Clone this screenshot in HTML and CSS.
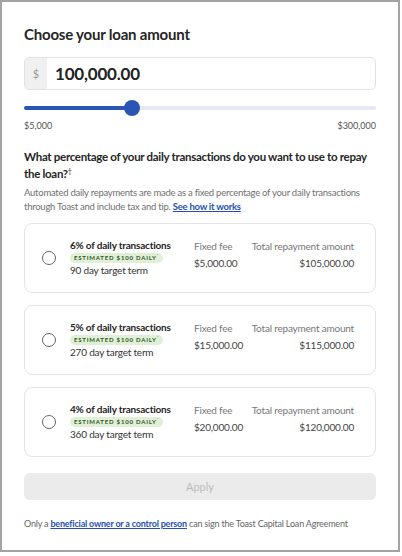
FILE: index.html
```html
<!DOCTYPE html>
<html lang="en">
<head>
  <meta charset="UTF-8">
  <meta name="viewport" content="width=device-width, initial-scale=1.0">
  <title>Choose your loan amount</title>
  <link rel="stylesheet" href="styles.css">
</head>
<body>
  <div class="loan-panel">
    <h1>Choose your loan amount</h1>

    <div class="amount-field">
      <span class="amount-prefix">$</span>
      <span class="amount-value">100,000.00</span>
    </div>

    <div class="slider">
      <div class="slider-fill"></div>
      <div class="slider-thumb"></div>
    </div>
    <div class="slider-labels">
      <span>$5,000</span>
      <span>$300,000</span>
    </div>

    <h2>What percentage of your daily transactions do you want to use to repay the loan?<sup>†</sup></h2>
    <p class="hint">Automated daily repayments are made as a fixed percentage of your daily transactions through Toast and include tax and tip. <a href="#">See how it works</a></p>

    <div class="options">
      <label class="option">
        <span class="radio"></span>
        <div class="option-main">
          <div class="option-title">6% of daily transactions</div>
          <span class="badge">Estimated $100 daily<sup>*</sup></span>
          <div class="option-term">90 day target term</div>
        </div>
        <div class="option-fee">
          <div class="col-label">Fixed fee</div>
          <div class="col-value">$5,000.00</div>
        </div>
        <div class="option-total">
          <div class="col-label">Total repayment amount</div>
          <div class="col-value">$105,000.00</div>
        </div>
      </label>

      <label class="option">
        <span class="radio"></span>
        <div class="option-main">
          <div class="option-title">5% of daily transactions</div>
          <span class="badge">Estimated $100 daily<sup>*</sup></span>
          <div class="option-term">270 day target term</div>
        </div>
        <div class="option-fee">
          <div class="col-label">Fixed fee</div>
          <div class="col-value">$15,000.00</div>
        </div>
        <div class="option-total">
          <div class="col-label">Total repayment amount</div>
          <div class="col-value">$115,000.00</div>
        </div>
      </label>

      <label class="option">
        <span class="radio"></span>
        <div class="option-main">
          <div class="option-title">4% of daily transactions</div>
          <span class="badge">Estimated $100 daily<sup>*</sup></span>
          <div class="option-term">360 day target term</div>
        </div>
        <div class="option-fee">
          <div class="col-label">Fixed fee</div>
          <div class="col-value">$20,000.00</div>
        </div>
        <div class="option-total">
          <div class="col-label">Total repayment amount</div>
          <div class="col-value">$120,000.00</div>
        </div>
      </label>
    </div>

    <button class="apply" disabled>Apply</button>

    <p class="footnote">Only a <a href="#">beneficial owner or a control person</a> can sign the Toast Capital Loan Agreement</p>
  </div>
</body>
</html>
```

FILE: styles.css
```css
body {
  margin: 0;
  background: #fff;
  font-family: 'Lato', sans-serif;
  color: #252525;
}
.loan-panel {
  width: 400px;
  height: 552px;
  box-sizing: border-box;
  border: 2px solid #a3a3a3;
  padding: 20px 22px 0 22px;
}
h1 {
  font-size: 15px;
  letter-spacing: -0.2px;
  font-weight: 700;
  margin: 0 0 11px;
  line-height: 24px;
}
.amount-field {
  display: flex;
  height: 31px;
  border: 1px solid #e2e2e2;
  border-radius: 5px;
  overflow: hidden;
}
.amount-prefix {
  width: 22px;
  background: #f0f0f0;
  color: #999;
  font-size: 11px;
  display: flex;
  align-items: center;
  justify-content: center;
}
.amount-value {
  font-size: 17px;
  letter-spacing: -0.2px;
  font-weight: 700;
  padding-left: 8px;
  display: flex;
  align-items: center;
  color: #222;
}
.slider {
  position: relative;
  height: 4px;
  margin-top: 16px;
  background: #e6e9f5;
  border-radius: 2px;
}
.slider-fill {
  width: 108px;
  height: 4px;
  background: #2b55b5;
  border-radius: 2px;
}
.slider-thumb {
  position: absolute;
  left: 100px;
  top: -6px;
  width: 16px;
  height: 16px;
  border-radius: 50%;
  background: #2b55b5;
}
.slider-labels {
  display: flex;
  justify-content: space-between;
  font-size: 9px;
  color: #555;
  margin-top: 10px;
}
h2 {
  font-size: 11.5px;
  font-weight: 700;
  letter-spacing: -0.3px;
  line-height: 17px;
  margin: 17px 0 4px;
}
h2 sup {
  font-size: 7px;
  font-weight: 400;
  line-height: 0;
  vertical-align: 4px;
}
.hint {
  font-size: 9.5px;
  letter-spacing: -0.25px;
  line-height: 14px;
  color: #707070;
  margin: 0 0 9px;
}
a {
  color: #2650b5;
  font-weight: 700;
}
.options {
  display: flex;
  flex-direction: column;
  gap: 12px;
}
.option {
  display: flex;
  align-items: center;
  height: 70px;
  box-sizing: border-box;
  border: 1px solid #e4e4e4;
  border-radius: 8px;
  padding: 0 21px 0 17px;
  letter-spacing: -0.2px;
  white-space: nowrap;
}
.radio {
  width: 12px;
  height: 12px;
  border: 1.5px solid #666;
  border-radius: 50%;
  margin-right: 14px;
}
.option-main {
  width: 124px;
}
.option-title {
  font-size: 10px;
  font-weight: 700;
  line-height: 13px;
}
.badge {
  display: block;
  width: fit-content;
  background: #dff0d6;
  color: #33552b;
  font-size: 6px;
  line-height: 8px;
  font-weight: 700;
  letter-spacing: 0.8px;
  text-transform: uppercase;
  border-radius: 5px;
  padding: 1px 4px;
  margin: 1px 0;
}
.badge sup {
  font-size: 4px;
  line-height: 0;
  color: #888;
}
.option-term {
  font-size: 10px;
  line-height: 13px;
  color: #333;
}
.option-fee,
.option-total {
  align-self: flex-start;
  padding-top: 15px;
}
.option-fee {
  flex: 1;
}
.option-total {
  text-align: right;
}
.col-label {
  font-size: 10px;
  color: #777;
  line-height: 14px;
  margin-bottom: 3px;
}
.col-value {
  font-size: 10px;
  color: #444;
  line-height: 14px;
}
.apply {
  display: block;
  width: 100%;
  height: 27px;
  margin-top: 16px;
  border: none;
  border-radius: 6px;
  background: #ebebeb;
  color: #bcbcbc;
  font-family: inherit;
  font-size: 11px;
}
.footnote {
  font-size: 9px;
  letter-spacing: -0.2px;
  color: #666;
  margin: 18px 0 0;
}
```
